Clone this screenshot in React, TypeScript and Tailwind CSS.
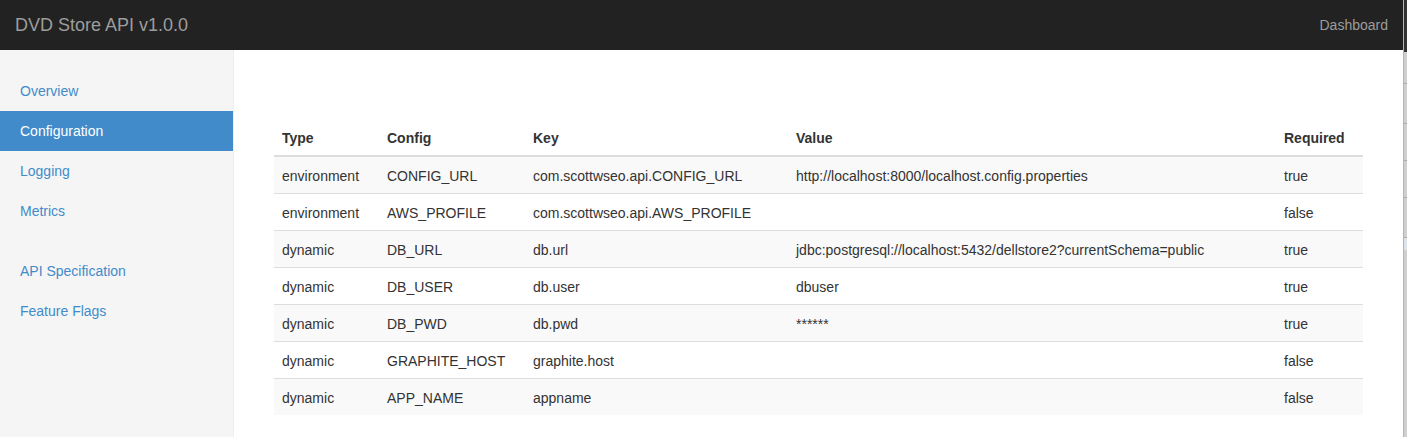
const rows = [
  ["environment", "CONFIG_URL", "com.scottwseo.api.CONFIG_URL", "http://localhost:8000/localhost.config.properties", "true"],
  ["environment", "AWS_PROFILE", "com.scottwseo.api.AWS_PROFILE", "", "false"],
  ["dynamic", "DB_URL", "db.url", "jdbc:postgresql://localhost:5432/dellstore2?currentSchema=public", "true"],
  ["dynamic", "DB_USER", "db.user", "dbuser", "true"],
  ["dynamic", "DB_PWD", "db.pwd", "******", "true"],
  ["dynamic", "GRAPHITE_HOST", "graphite.host", "", "false"],
  ["dynamic", "APP_NAME", "appname", "", "false"],
];

const navTop = ["Overview", "Configuration", "Logging", "Metrics"];
const navBottom = ["API Specification", "Feature Flags"];

function NavItem({ label }: { label: string }) {
  const active = label === "Configuration";
  return (
    <li>
      <a
        href="#"
        className={
          active
            ? "block h-10 px-5 leading-10 bg-[#428bca] text-white"
            : "block h-10 px-5 leading-10 text-[#428bca]"
        }
      >
        {label}
      </a>
    </li>
  );
}

export default function App() {
  return (
    <div
      className="flex h-[437px] w-[1407px] overflow-hidden bg-white text-[14px] text-[#333]"
      style={{ fontFamily: '"Liberation Sans", Arial, sans-serif' }}
    >
      <div className="flex w-[1403px] flex-col">
        <nav className="flex h-[50px] items-center justify-between bg-[#222] px-[15px]">
          <span className="text-[18px] text-[#9d9d9d]">DVD Store API v1.0.0</span>
          <span className="text-[#9d9d9d]">Dashboard</span>
        </nav>

        <div className="flex flex-1">
          <aside className="w-[234px] border-r border-[#eee] bg-[#f5f5f5] pt-[21px]">
            <ul className="mb-5">
              {navTop.map((l) => (
                <NavItem key={l} label={l} />
              ))}
            </ul>
            <ul>
              {navBottom.map((l) => (
                <NavItem key={l} label={l} />
              ))}
            </ul>
          </aside>

          <main className="flex-1 px-10 pt-[69px]">
            <table className="w-full table-fixed border-collapse leading-5">
              <colgroup>
                <col className="w-[105px]" />
                <col className="w-[146px]" />
                <col className="w-[263px]" />
                <col className="w-[488px]" />
                <col />
              </colgroup>
              <thead>
                <tr className="border-b-2 border-[#ddd] text-left">
                  {["Type", "Config", "Key", "Value", "Required"].map((h) => (
                    <th key={h} className="h-[37px] px-2 pt-px font-bold">
                      {h}
                    </th>
                  ))}
                </tr>
              </thead>
              <tbody>
                {rows.map((r, i) => (
                  <tr
                    key={r[1]}
                    className={
                      i % 2 === 0
                        ? "border-t border-[#ddd] bg-[#f9f9f9]"
                        : "border-t border-[#ddd]"
                    }
                  >
                    {r.map((c, j) => (
                      <td key={j} className="h-[37px] whitespace-nowrap px-2 pt-[3px]">
                        {c}
                      </td>
                    ))}
                  </tr>
                ))}
              </tbody>
            </table>
          </main>
        </div>
      </div>

      <div className="flex w-1 flex-col border-l border-[#b5b5b5] bg-[#cfcfcf]">
        <div className="h-[52px] bg-[#333]" />
        <div className="h-[32px] border-b border-[#aaa]" />
        <div className="h-[40px] border-b border-[#aaa]" />
        <div className="h-[37px] border-b border-[#aaa]" />
        <div className="h-[37px] border-b border-[#aaa]" />
        <div className="h-[40px] border-b border-[#aaa]" />
        <div className="h-[12px] bg-[#dde3ea]" />
      </div>
    </div>
  );
}
